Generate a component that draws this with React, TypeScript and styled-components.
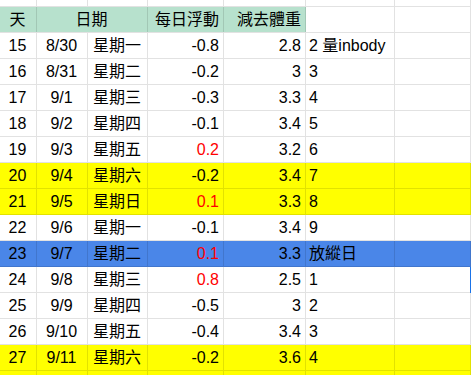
import React from 'react'
import styled, { createGlobalStyle, css } from 'styled-components'

const GlobalStyle = createGlobalStyle`
  html, body {
    margin: 0;
    padding: 0;
    background: #ffffff;
  }
  body {
    font-family: 'Liberation Sans', 'Noto Sans CJK TC', sans-serif;
    font-size: 16px;
    color: #000000;
    overflow: hidden;
  }
`

const COLUMNS = '37px 51px 60px 76px 82px 89px 76px 1fr'
const GRID_LINE = 'rgba(0, 0, 0, 0.115)'

type Fill = 'none' | 'yellow' | 'blue'

const fills: Record<Fill, string> = {
  none: '#ffffff',
  yellow: '#ffff00',
  blue: '#4a86e8',
}

// One horizontal band of the sheet.
const Row = styled.div<{ $fill?: Fill; $height?: number }>`
  display: grid;
  grid-template-columns: ${COLUMNS};
  height: ${(p) => p.$height ?? 26}px;
  box-sizing: border-box;
  border-bottom: 1px solid ${GRID_LINE};
  background: ${(p) => fills[p.$fill ?? 'none']};
`

const Cell = styled.div<{
  $align?: 'left' | 'center' | 'right'
  $header?: boolean
  $red?: boolean
  $span?: number
  $edge?: boolean
}>`
  position: relative;
  display: flex;
  align-items: center;
  justify-content: ${(p) =>
    p.$align === 'right' ? 'flex-end' : p.$align === 'center' ? 'center' : 'flex-start'};
  padding: 0 4px 0 3px;
  box-sizing: border-box;
  border-right: 1px solid ${GRID_LINE};
  white-space: nowrap;
  overflow: visible;
  line-height: 1;
  color: ${(p) => (p.$red ? '#ff0000' : '#000000')};
  ${(p) => p.$span && css`grid-column: span ${p.$span};`}
  ${(p) => p.$header && css`background: #b7e1cd;`}
  ${(p) =>
    p.$edge &&
    css`
      &::after {
        content: '';
        position: absolute;
        top: 0;
        bottom: -1px;
        right: -2px;
        width: 2px;
        background: #1a73e8;
      }
    `}
`

interface Entry {
  day: number
  date: string
  weekday: string
  delta: string
  loss: string
  note: string
  fill?: Fill
  edge?: boolean
}

const entries: Entry[] = [
  { day: 15, date: '8/30', weekday: '星期一', delta: '-0.8', loss: '2.8', note: '2 量inbody' },
  { day: 16, date: '8/31', weekday: '星期二', delta: '-0.2', loss: '3', note: '3' },
  { day: 17, date: '9/1', weekday: '星期三', delta: '-0.3', loss: '3.3', note: '4' },
  { day: 18, date: '9/2', weekday: '星期四', delta: '-0.1', loss: '3.4', note: '5' },
  { day: 19, date: '9/3', weekday: '星期五', delta: '0.2', loss: '3.2', note: '6' },
  { day: 20, date: '9/4', weekday: '星期六', delta: '-0.2', loss: '3.4', note: '7', fill: 'yellow' },
  { day: 21, date: '9/5', weekday: '星期日', delta: '0.1', loss: '3.3', note: '8', fill: 'yellow' },
  { day: 22, date: '9/6', weekday: '星期一', delta: '-0.1', loss: '3.4', note: '9' },
  { day: 23, date: '9/7', weekday: '星期二', delta: '0.1', loss: '3.3', note: '放縱日', fill: 'blue' },
  { day: 24, date: '9/8', weekday: '星期三', delta: '0.8', loss: '2.5', note: '1', edge: true },
  { day: 25, date: '9/9', weekday: '星期四', delta: '-0.5', loss: '3', note: '2' },
  { day: 26, date: '9/10', weekday: '星期五', delta: '-0.4', loss: '3.4', note: '3' },
  { day: 27, date: '9/11', weekday: '星期六', delta: '-0.2', loss: '3.6', note: '4', fill: 'yellow' },
]

const Sheet = styled.div`
  width: 100%;
  height: 375px;
  overflow: hidden;
`

const blanks = (n: number) => Array.from({ length: n }, (_, i) => <Cell key={`b${i}`} />)

export default function App() {
  return (
    <>
      <GlobalStyle />
      <Sheet>
        <Row $height={7}>{blanks(8)}</Row>
        <Row>
          <Cell $header $align="center">天</Cell>
          <Cell $header $align="center" $span={2}>日期</Cell>
          <Cell $header $align="right">每日浮動</Cell>
          <Cell $header $align="right">減去體重</Cell>
          <Cell />
          <Cell />
          <Cell />
        </Row>
        {entries.map((e) => (
          <Row key={e.day} $fill={e.fill}>
            <Cell $align="center">{e.day}</Cell>
            <Cell $align="center">{e.date}</Cell>
            <Cell $align="center">{e.weekday}</Cell>
            <Cell $align="right" $red={!e.delta.startsWith('-')}>{e.delta}</Cell>
            <Cell $align="right">{e.loss}</Cell>
            <Cell>{e.note}</Cell>
            <Cell $edge={e.edge} />
            <Cell />
          </Row>
        ))}
        <Row $fill="yellow">{blanks(8)}</Row>
      </Sheet>
    </>
  )
}
